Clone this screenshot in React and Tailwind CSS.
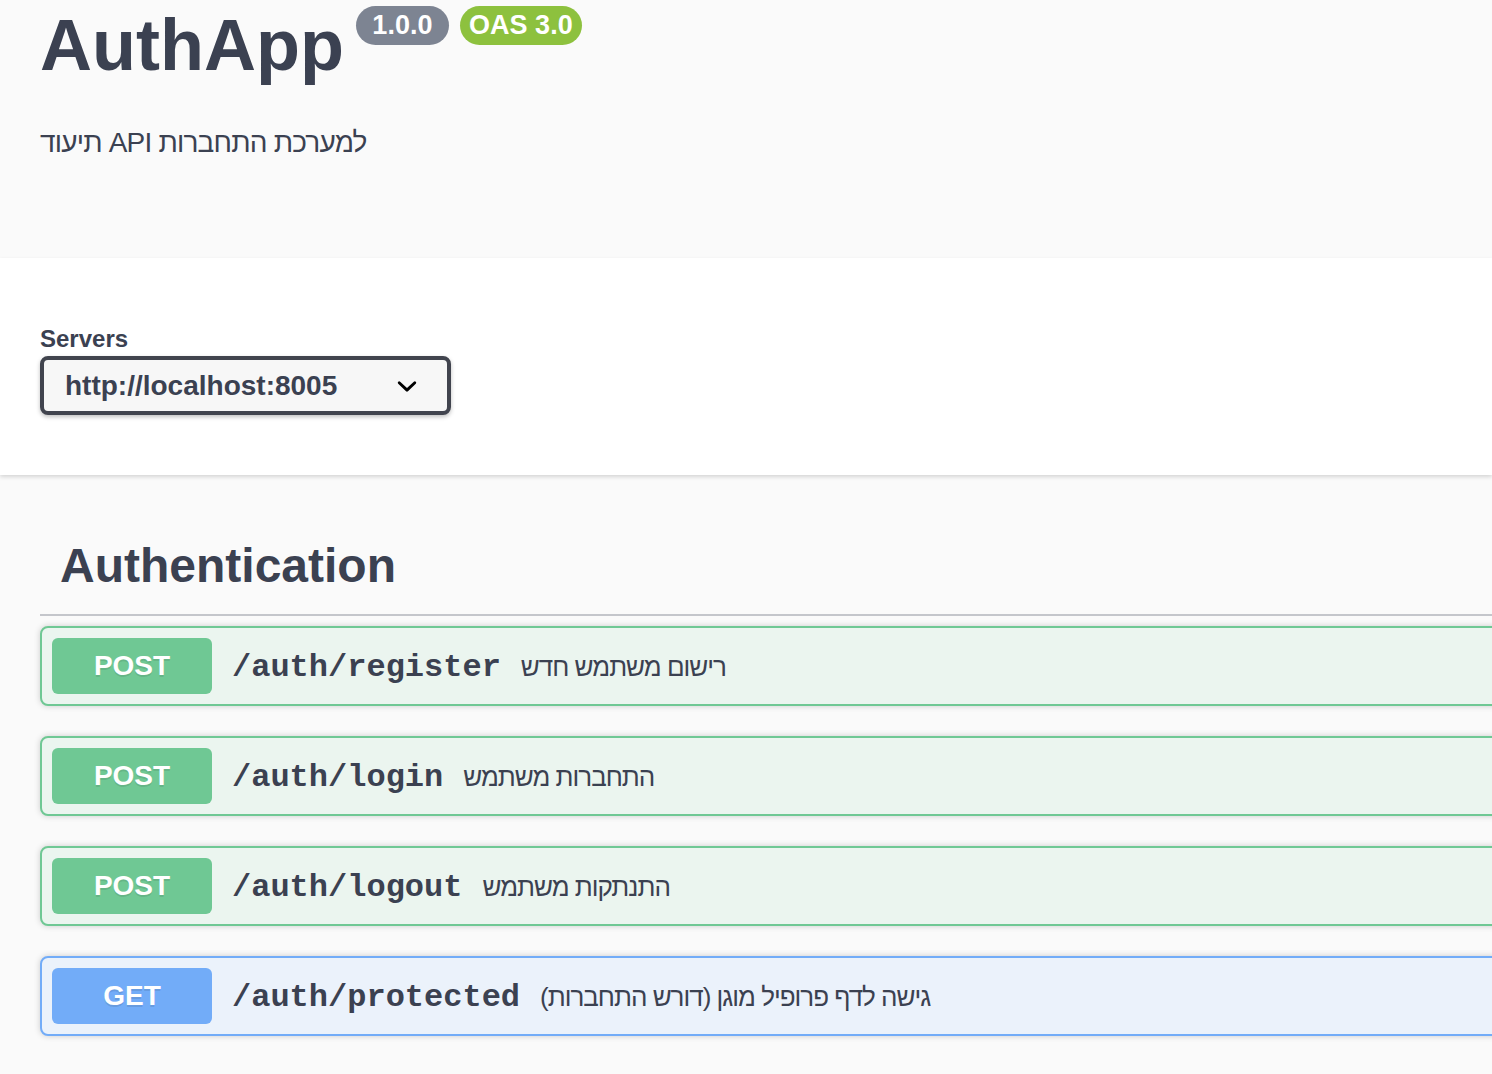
const ops = [
  { method: 'POST', path: '/auth/register', summary: 'רישום משתמש חדש' },
  { method: 'POST', path: '/auth/login', summary: 'התחברות משתמש' },
  { method: 'POST', path: '/auth/logout', summary: 'התנתקות משתמש' },
  { method: 'GET', path: '/auth/protected', summary: 'גישה לדף פרופיל מוגן (דורש התחברות)' },
];

const sans = { fontFamily: '"Liberation Sans", Arial, sans-serif' };

function Chevron() {
  return (
    <svg width="40" height="40" viewBox="0 0 20 20" className="shrink-0">
      <path
        d="M13.418 7.859a.695.695 0 01.978 0 .68.68 0 010 .969l-3.908 3.83a.697.697 0 01-.979 0l-3.908-3.83a.68.68 0 010-.969.695.695 0 01.978 0L10 11l3.418-3.141z"
        fill="#000"
      />
    </svg>
  );
}

function OpBlock({ method, path, summary }) {
  const post = method === 'POST';
  return (
    <div
      className={
        'flex items-center h-[80px] p-[10px] border-2 rounded-[8px] shadow-[0_0_6px_rgba(0,0,0,0.19)] ' +
        (post ? 'border-[#6fc894] bg-[#ebf5ef]' : 'border-[#72acf8] bg-[#ebf2fb]')
      }
    >
      <div
        className={
          'w-[160px] h-[56px] rounded-[6px] flex items-center justify-center text-white font-bold text-[28px] [text-shadow:0_2px_0_rgba(0,0,0,0.1)] ' +
          (post ? 'bg-[#6fc894]' : 'bg-[#72acf8]')
        }
      >
        {method}
      </div>
      <span className="px-[20px] pt-[3px] text-[32px] font-bold text-[#3b4151] font-['Liberation_Mono',monospace]">
        {path}
      </span>
      <span className="pt-[2px] text-[26px] tracking-[-1px] text-[#3b4151]">{summary}</span>
    </div>
  );
}

export default function App() {
  return (
    <div className="w-[1492px] h-[1074px] overflow-hidden bg-[#fafafa] text-[#3b4151]" style={sans}>
      <div className="h-[258px] px-[40px]">
        <div className="flex items-start">
          <h1 className="mt-[9px] text-[72px] leading-[72px] font-bold">AuthApp</h1>
          <span className="ml-[12px] mt-[6px] w-[93px] h-[39px] rounded-full bg-[#7d8492] text-white font-bold text-[27px] flex items-center justify-center">
            1.0.0
          </span>
          <span className="ml-[11px] mt-[6px] w-[122px] h-[39px] rounded-full bg-[#8dc13e] text-white font-bold text-[27px] flex items-center justify-center">
            OAS 3.0
          </span>
        </div>
        <p className="mt-[41px] text-[28px] leading-[42px] tracking-[-0.8px]">תיעוד API למערכת התחברות</p>
      </div>

      <div className="h-[217px] bg-white px-[40px] pt-[66px] shadow-[0_2px_4px_rgba(0,0,0,0.15)] relative">
        <div className="text-[24px] leading-[30px] font-bold">Servers</div>
        <div className="mt-[2px] w-[411px] h-[59px] border-4 border-[#41444e] rounded-[8px] bg-[#f7f7f7] shadow-[0_2px_4px_rgba(0,0,0,0.25)] flex items-center justify-between pl-[21px] pr-[20px]">
          <span className="text-[28px] font-bold">http://localhost:8005</span>
          <Chevron />
        </div>
      </div>

      <div className="pt-[42px] pl-[40px]">
        <div className="w-[1600px]">
          <h3 className="pl-[20px] py-[20px] text-[48px] leading-[57px] font-bold border-b-2 border-[#c4c6cb]">
            Authentication
          </h3>
          <div className="mt-[10px] flex flex-col gap-[30px]">
            {ops.map((op) => (
              <OpBlock key={op.path} {...op} />
            ))}
          </div>
        </div>
      </div>
    </div>
  );
}
